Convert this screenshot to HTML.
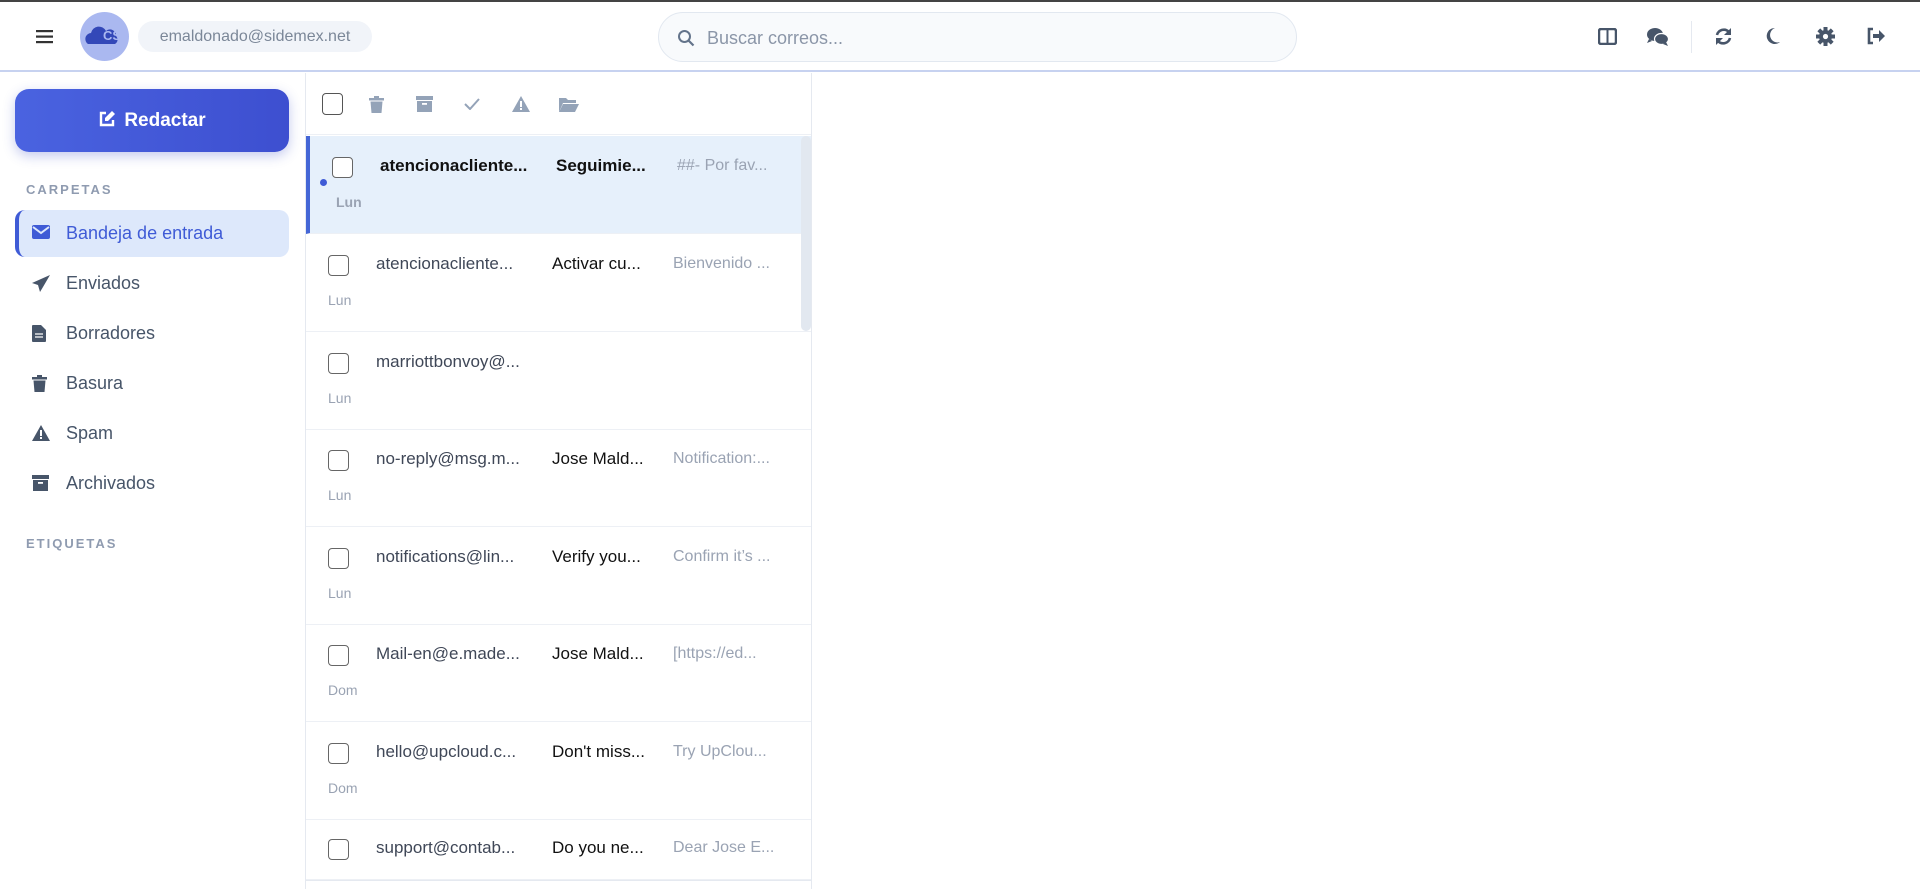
<!DOCTYPE html>
<html><head><meta charset="utf-8"><style>
*{box-sizing:border-box;margin:0;padding:0}
body{width:1920px;height:889px;overflow:hidden;background:#fff;font-family:"Liberation Sans",Arial,sans-serif;position:relative;color:#475569}
.a{position:absolute}
.topline{left:0;top:0;width:1920px;height:2px;background:#444}
.hdr{left:0;top:2px;width:1920px;height:70px;background:#fff;border-bottom:2px solid #c7d2f0}
.pill{left:138px;top:21px;width:234px;height:31px;border-radius:16px;background:#f1f4f9;color:#7b8798;font-size:16px;line-height:31px;text-align:center}
.search{left:658px;top:12px;width:639px;height:50px;border-radius:25px;background:#f8fafc;border:1px solid #e2e8f0}
.search span{position:absolute;left:48px;top:15px;font-size:18px;color:#8b96a8}
.compose{left:15px;top:89px;width:274px;height:63px;border-radius:14px;background:linear-gradient(90deg,#4a63e0,#3d4fd0);box-shadow:0 4px 12px rgba(60,80,200,.3);color:#fff;font-weight:bold;font-size:19px;line-height:63px;text-align:center}
.sec{font-size:13px;font-weight:bold;letter-spacing:2px;color:#8f9bb0}
.nav{left:15px;width:274px;height:47px;font-size:18px;line-height:47px;padding-left:51px;color:#475569}
.nav svg{position:absolute;left:17px;top:15px}
.nav.on{background:#dde8fb;border-radius:10px;color:#3f5bd6;border-left:4px solid #3f5bd6;padding-left:47px}
.nav.on svg{left:13px}
.side{left:305px;top:73px;width:1px;height:816px;background:#e5e9f0}
.lr{left:811px;top:73px;width:1px;height:816px;background:#e5e9f0}
.row{left:306px;width:505px;height:98px;border-bottom:1px solid #edf0f5}
.row .cb{position:absolute;left:22px;top:21px;width:21px;height:21px;border:1.5px solid #666;border-radius:4px;background:#fff}
.row .s{position:absolute;left:70px;top:20px;font-size:17px;color:#3f4757}
.row .j{position:absolute;left:246px;top:20px;font-size:17px;color:#111}
.row .p{position:absolute;left:367px;top:21px;font-size:16px;color:#9aa3b3}
.row .d{position:absolute;left:22px;top:58px;font-size:14px;color:#9aa3b3}
.row.sel{background:#e6f0fb;border-left:4px solid #4466d6}
.row.sel .cb{left:22px}
.row.sel .s{left:70px;font-weight:bold;color:#111}
.row.sel .j{font-weight:bold}
.row.sel .d{left:26px;font-weight:bold}
.ic{fill:#475569}
</style></head><body>
<div class="a topline"></div>
<div class="a hdr"></div>
<svg class="a" style="left:36px;top:29px" width="17" height="15"><rect y="1" width="17" height="2.2" fill="#333"/><rect y="6.5" width="17" height="2.2" fill="#333"/><rect y="12" width="17" height="2.2" fill="#333"/></svg>
<div class="a" style="left:80px;top:12px;width:49px;height:49px;border-radius:50%;background:#aab8f0"></div>
<svg class="a" style="left:84px;top:24px" width="42" height="24"><path d="M4 20a6 6 0 0 1 3-11a8 8 0 0 1 15-2a6 6 0 0 1 10 5a5 5 0 0 1-1 8z" fill="#3348b8"/><text x="19" y="16" font-size="13" font-weight="bold" fill="#aab8f0" font-family="Liberation Sans">CS</text></svg>
<div class="a pill">emaldonado@sidemex.net</div>
<div class="a search"><svg style="position:absolute;left:18px;top:16px" width="18" height="18"><circle cx="7.5" cy="7.5" r="5.5" stroke="#64748b" stroke-width="2" fill="none"/><path d="M11.5 11.5l5 5" stroke="#64748b" stroke-width="2.2"/></svg><span>Buscar correos...</span></div>
<!-- right icons -->
<svg class="a" style="left:1598px;top:28px" width="19" height="17"><rect x="1" y="1" width="17" height="15" rx="2" fill="none" stroke="#475569" stroke-width="2.5"/><rect x="8.5" y="2" width="2" height="13" fill="#475569"/></svg>
<svg class="a" style="left:1646px;top:27px" width="24" height="20"><ellipse cx="9" cy="7.5" rx="8" ry="6.5" fill="#475569"/><path d="M3 12l-2 4 5-2z" fill="#475569"/><ellipse cx="15.5" cy="12" rx="7" ry="5.5" fill="#475569" stroke="#fff" stroke-width="1.2"/><path d="M20 15l2 4-5-2z" fill="#475569"/></svg>
<div class="a" style="left:1691px;top:21px;width:1px;height:32px;background:#e5e9f0"></div>
<svg class="a" style="left:1714px;top:27px" width="19" height="19"><path d="M3 8a7 7 0 0 1 12-3" stroke="#475569" stroke-width="2.6" fill="none"/><path d="M17 1v7h-7z" fill="#475569"/><path d="M16 11a7 7 0 0 1-12 3" stroke="#475569" stroke-width="2.6" fill="none"/><path d="M2 18v-7h7z" fill="#475569"/></svg>
<svg class="a" style="left:1765px;top:27px" width="16" height="18"><path d="M10 1a8 8 0 1 0 5 14a7 7 0 0 1-5-14z" fill="#475569"/></svg>
<svg class="a" style="left:1816px;top:27px" width="19" height="19"><g fill="#475569"><circle cx="9.5" cy="9.5" r="6.5"/><rect x="7.5" y="0" width="4" height="19"/><rect x="0" y="7.5" width="19" height="4"/><rect x="7.5" y="0" width="4" height="19" transform="rotate(45 9.5 9.5)"/><rect x="7.5" y="0" width="4" height="19" transform="rotate(-45 9.5 9.5)"/></g><circle cx="9.5" cy="9.5" r="2.6" fill="#fff"/></svg>
<svg class="a" style="left:1866px;top:27px" width="20" height="18"><path d="M7 2H3v14h4" stroke="#475569" stroke-width="2.6" fill="none"/><path d="M7 7h6V3l6 6-6 6v-4H7z" fill="#475569"/></svg>

<!-- sidebar -->
<div class="a compose"><svg style="position:relative;top:2px;margin-right:8px" width="18" height="18"><path d="M8 3H3v12h12v-5" stroke="#fff" stroke-width="2.4" fill="none"/><path d="M14 1l3 3-7 7H7V8z" fill="#fff"/></svg>Redactar</div>
<div class="a sec" style="left:26px;top:182px">CARPETAS</div>
<div class="a nav on" style="top:210px"><svg width="18" height="14"><rect width="18" height="14" rx="2" fill="#3f5bd6"/><path d="M1 2l8 6 8-6" stroke="#dde8fb" stroke-width="2" fill="none"/></svg>Bandeja de entrada</div>
<div class="a nav" style="top:260px"><svg width="18" height="17"><path d="M18 0L0 8l6 2 2 7 3-5z" fill="#475569"/></svg>Enviados</div>
<div class="a nav" style="top:310px"><svg width="14" height="17"><path d="M0 1a1 1 0 0 1 1-1h8l5 5v11a1 1 0 0 1-1 1H1a1 1 0 0 1-1-1z" fill="#475569"/><path d="M3 9h8M3 12h8" stroke="#fff" stroke-width="1.3"/></svg>Borradores</div>
<div class="a nav" style="top:360px"><svg width="15" height="17"><rect x="0" y="2" width="15" height="2.5" fill="#475569"/><rect x="5" y="0" width="5" height="2" fill="#475569"/><path d="M1.5 5.5h12l-1 11.5h-10z" fill="#475569"/></svg>Basura</div>
<div class="a nav" style="top:410px"><svg width="18" height="16"><path d="M9 0l9 16H0z" fill="#475569"/><rect x="8" y="5" width="2" height="6" fill="#fff"/><rect x="8" y="12" width="2" height="2" fill="#fff"/></svg>Spam</div>
<div class="a nav" style="top:460px"><svg width="17" height="16"><rect width="17" height="4" fill="#475569"/><path d="M1 5h15v11H1z" fill="#475569"/><rect x="6" y="7" width="5" height="1.8" fill="#fff"/></svg>Archivados</div>
<div class="a sec" style="left:26px;top:536px">ETIQUETAS</div>
<div class="a side"></div>
<div class="a lr"></div>

<!-- toolbar -->
<div class="a" style="left:306px;top:134px;width:505px;height:1px;background:#edf0f5"></div>
<div class="a" style="left:322px;top:93px;width:21px;height:22px;border:1.5px solid #555;border-radius:4px"></div>
<svg class="a" style="left:369px;top:96px" width="15" height="17"><rect y="2" width="15" height="2.5" fill="#94a3b8"/><rect x="5" width="5" height="2" fill="#94a3b8"/><path d="M1.5 5.5h12l-1 11.5h-10z" fill="#94a3b8"/></svg>
<svg class="a" style="left:416px;top:96px" width="17" height="16"><rect width="17" height="4" fill="#94a3b8"/><path d="M1 5h15v11H1z" fill="#94a3b8"/><rect x="6" y="7" width="5" height="1.8" fill="#fff"/></svg>
<svg class="a" style="left:464px;top:98px" width="16" height="12"><path d="M1 6l5 5 9-10" stroke="#94a3b8" stroke-width="2" fill="none"/></svg>
<svg class="a" style="left:512px;top:96px" width="18" height="16"><path d="M9 0l9 16H0z" fill="#94a3b8"/><rect x="8" y="5" width="2" height="6" fill="#fff"/><rect x="8" y="12" width="2" height="2" fill="#fff"/></svg>
<svg class="a" style="left:559px;top:97px" width="20" height="15"><path d="M0 1h7l2 2h8v3H4L0 15z" fill="#94a3b8"/><path d="M4 7h16l-4 8H0z" fill="#94a3b8"/></svg>

<!-- rows -->
<div class="a row sel" style="top:136px"><div class="cb"></div><div class="s">atencionacliente...</div><div class="j">Seguimie...</div><div class="p">##- Por fav...</div><div style="position:absolute;left:10px;top:43px;width:7px;height:7px;border-radius:50%;background:#3f5bd6"></div><div class="d">Lun</div></div>
<div class="a row" style="top:234px"><div class="cb"></div><div class="s">atencionacliente...</div><div class="j">Activar cu...</div><div class="p">Bienvenido ...</div><div class="d">Lun</div></div>
<div class="a row" style="top:332px"><div class="cb"></div><div class="s">marriottbonvoy@...</div><div class="d">Lun</div></div>
<div class="a row" style="top:429px"><div class="cb"></div><div class="s">no-reply@msg.m...</div><div class="j">Jose Mald...</div><div class="p">Notification:...</div><div class="d">Lun</div></div>
<div class="a row" style="top:527px"><div class="cb"></div><div class="s">notifications@lin...</div><div class="j">Verify you...</div><div class="p">Confirm it’s ...</div><div class="d">Lun</div></div>
<div class="a row" style="top:624px"><div class="cb"></div><div class="s">Mail-en@e.made...</div><div class="j">Jose Mald...</div><div class="p">[https://ed...</div><div class="d">Dom</div></div>
<div class="a row" style="top:722px"><div class="cb"></div><div class="s">hello@upcloud.c...</div><div class="j">Don't miss...</div><div class="p">Try UpClou...</div><div class="d">Dom</div></div>
<div class="a row" style="top:818px;height:62px"><div class="cb"></div><div class="s">support@contab...</div><div class="j">Do you ne...</div><div class="p">Dear Jose E...</div></div>
<div class="a" style="left:306px;top:880px;width:505px;height:1px;background:#e5e9f0"></div>
<div class="a" style="left:801px;top:136px;width:10px;height:195px;border-radius:5px;background:#e2e8f0"></div>
</body></html>
